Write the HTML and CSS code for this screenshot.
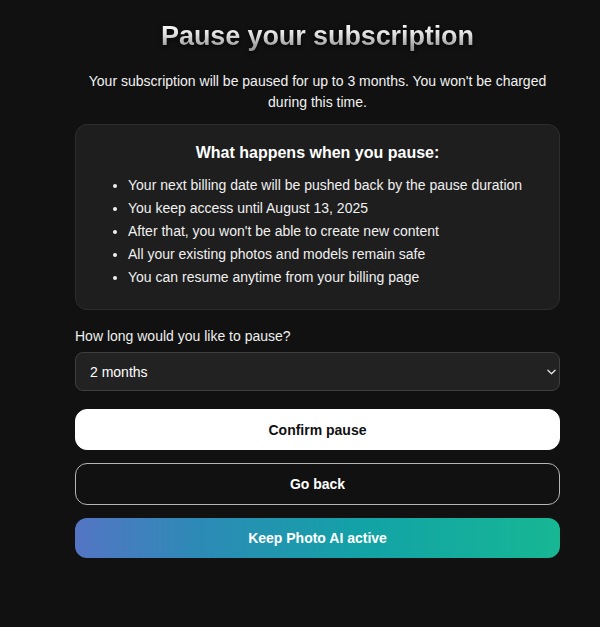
FILE: index.html
```html
<!DOCTYPE html>
<html lang="en">
<head>
<meta charset="utf-8">
<title>Pause your subscription</title>
<link rel="stylesheet" href="styles.css">
</head>
<body>
<main class="pause">
  <h1 class="pause-title">Pause your subscription</h1>
  <p class="pause-intro">Your subscription will be paused for up to 3 months. You won't be charged during this time.</p>

  <section class="info-card">
    <h2 class="info-title">What happens when you pause:</h2>
    <ul class="info-list">
      <li>Your next billing date will be pushed back by the pause duration</li>
      <li>You keep access until August 13, 2025</li>
      <li>After that, you won't be able to create new content</li>
      <li>All your existing photos and models remain safe</li>
      <li>You can resume anytime from your billing page</li>
    </ul>
  </section>

  <label class="field-label" for="duration">How long would you like to pause?</label>
  <div class="select-wrap">
    <select id="duration" class="select">
      <option>1 month</option>
      <option selected>2 months</option>
      <option>3 months</option>
    </select>
    <svg class="select-chevron" viewBox="0 0 10 6" width="9" height="6" aria-hidden="true">
      <path d="M1 1l4 4 4-4" fill="none" stroke="#e5e5e5" stroke-width="1.4" stroke-linecap="round" stroke-linejoin="round"/>
    </svg>
  </div>

  <div class="actions">
    <button class="btn btn-light" type="button">Confirm pause</button>
    <button class="btn btn-outline" type="button">Go back</button>
    <button class="btn btn-gradient" type="button">Keep Photo AI active</button>
  </div>
</main>
</body>
</html>
```

FILE: styles.css
```css
* {
  box-sizing: border-box;
}

html, body {
  margin: 0;
  background: #111111;
}

body {
  font-family: "Liberation Sans", Arial, Helvetica, sans-serif;
  color: #ffffff;
  padding: 0 40px 0 75px;
}

.pause {
  width: 485px;
  display: flex;
  flex-direction: column;
}

.pause-title {
  margin: 19px 0 0;
  text-align: center;
  font-size: 27px;
  line-height: 34px;
  font-weight: 700;
  letter-spacing: -0.1px;
  background: linear-gradient(180deg, #ffffff 10%, #e0e0e0 45%, #a8a8a8 75%, #8a8a8a 100%);
  -webkit-background-clip: text;
  background-clip: text;
  color: transparent;
  filter: drop-shadow(0 1px 2px rgba(0, 0, 0, 0.9));
}

.pause-intro {
  margin: 18px 0 0;
  text-align: center;
  font-size: 14px;
  line-height: 21px;
  color: #f2f2f2;
}

.info-card {
  margin-top: 11px;
  background: #1e1e1e;
  border: 1px solid #2d2d2d;
  border-radius: 12px;
  padding: 18px 20px 22px;
  height: 186px;
}

.info-title {
  margin: 0;
  text-align: center;
  font-size: 16px;
  line-height: 20px;
  font-weight: 700;
  color: #ffffff;
}

.info-list {
  margin: 11px 0 0;
  padding-left: 32px;
  font-size: 14px;
  line-height: 23px;
  color: #f0f0f0;
}

.field-label {
  margin-top: 17px;
  font-size: 14px;
  line-height: 18px;
  color: #eeeeee;
}

.select-wrap {
  position: relative;
  margin-top: 7px;
}

.select {
  appearance: none;
  -webkit-appearance: none;
  width: 100%;
  height: 39px;
  margin: 0;
  padding: 0 30px 0 14px;
  background: #222222;
  border: 1px solid #3f3f3f;
  border-radius: 8px;
  color: #ffffff;
  font-family: inherit;
  font-size: 14px;
}

.select-chevron {
  position: absolute;
  right: 4px;
  top: 17px;
}

.actions {
  margin-top: 18px;
  display: flex;
  flex-direction: column;
  gap: 13px;
}

.btn {
  width: 100%;
  height: 41px;
  border-radius: 12px;
  font-family: inherit;
  font-size: 14px;
  font-weight: 700;
  cursor: pointer;
}

.btn-light {
  background: #ffffff;
  border: 1px solid #ffffff;
  color: #111111;
}

.btn-outline {
  height: 42px;
  background: #111111;
  border: 1px solid #b5b5b5;
  color: #ffffff;
}

.btn-gradient {
  height: 40px;
  border: none;
  color: #ffffff;
  background: linear-gradient(90deg, #5475c4 0%, #2d8ab6 25%, #12a3a6 60%, #17b794 100%);
}
```
